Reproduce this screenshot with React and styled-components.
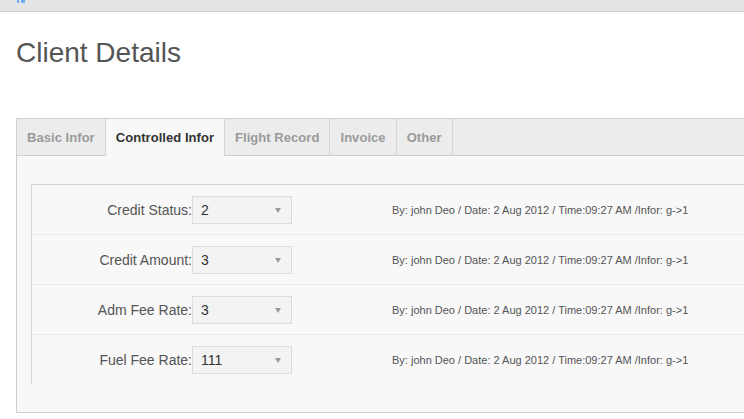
import styled, { createGlobalStyle } from 'styled-components';

const GlobalStyle = createGlobalStyle`
  html, body {
    margin: 0;
    padding: 0;
    background: #fff;
    font-family: "Liberation Sans", Arial, sans-serif;
    overflow: hidden;
  }
`;

const TopBar = styled.div`
  height: 11px;
  background: #e4e4e4;
  border-bottom: 1px solid #d2d2d2;
  padding-left: 17px;
  display: flex;
  align-items: flex-start;
`;

const Page = styled.div`
  padding-left: 16px;
  overflow: hidden;
`;

const Title = styled.h1`
  margin: 25px 0 49px;
  font-size: 28px;
  line-height: 32px;
  font-weight: normal;
  color: #555;
`;

const Panel = styled.div`
  width: 780px;
  border: 1px solid #cfcfcf;
`;

const TabBar = styled.div`
  display: flex;
  height: 36px;
  background: #ececec;
  border-bottom: 1px solid #cfcfcf;
`;

const Tab = styled.div`
  padding: 1px 10px 0;
  height: ${p => (p.$active ? '36px' : '35px')};
  line-height: 36px;
  font-size: 13px;
  font-weight: bold;
  letter-spacing: 0.05px;
  color: ${p => (p.$active ? '#333' : '#9a9a9a')};
  background: ${p => (p.$active ? '#f8f8f8' : 'transparent')};
  border-right: 1px solid #d6d6d6;
  position: relative;
  z-index: 1;
`;

const Content = styled.div`
  background: #f8f8f8;
  padding: 28px 0 28px 14px;
`;

const FieldList = styled.div`
  border-top: 1px solid #d6d6d6;
  border-left: 1px solid #d6d6d6;
`;

const Row = styled.div`
  display: flex;
  align-items: center;
  height: 49px;
  border-bottom: ${p => (p.$last ? 'none' : '1px solid #e8e8e8')};
`;

const Label = styled.div`
  width: 160px;
  text-align: right;
  font-size: 14px;
  color: #555;
`;

const Select = styled.div`
  box-sizing: border-box;
  width: 100px;
  height: 28px;
  padding: 0 8px;
  display: flex;
  align-items: center;
  justify-content: space-between;
  background: #f3f3f3;
  border: 1px solid #dcdcdc;
  font-size: 14px;
  color: #333;
`;

const Caret = styled.span`
  width: 0;
  height: 0;
  border-left: 3px solid transparent;
  border-right: 3px solid transparent;
  border-top: 5px solid #9a9a9a;
  margin-right: 2px;
  margin-top: 2px;
`;

const Info = styled.div`
  margin-left: 100px;
  font-size: 11px;
  color: #555;
`;

const tabs = ['Basic Infor', 'Controlled Infor', 'Flight Record', 'Invoice', 'Other'];

const fields = [
  { label: 'Credit Status:', value: '2' },
  { label: 'Credit Amount:', value: '3' },
  { label: 'Adm Fee Rate:', value: '3' },
  { label: 'Fuel Fee Rate:', value: '111' },
];

const audit = 'By: john Deo / Date: 2 Aug 2012 / Time:09:27 AM /Infor: g->1';

const App = () => {
  return (
    <>
      <GlobalStyle />
      <TopBar>
        <svg width="9" height="3" viewBox="0 0 9 3">
          <rect x="0" y="0" width="2" height="3" fill="#6aaef0" />
          <rect x="4" y="0" width="4" height="3" fill="#6aaef0" />
        </svg>
      </TopBar>
      <Page>
        <Title>Client Details</Title>
        <Panel>
          <TabBar>
            {tabs.map(t => (
              <Tab key={t} $active={t === 'Controlled Infor'}>
                {t}
              </Tab>
            ))}
          </TabBar>
          <Content>
            <FieldList>
              {fields.map((f, i) => (
                <Row key={f.label} $last={i === fields.length - 1}>
                  <Label>{f.label}</Label>
                  <Select>
                    {f.value}
                    <Caret />
                  </Select>
                  <Info>{audit}</Info>
                </Row>
              ))}
            </FieldList>
          </Content>
        </Panel>
      </Page>
    </>
  );
};

export default App;
